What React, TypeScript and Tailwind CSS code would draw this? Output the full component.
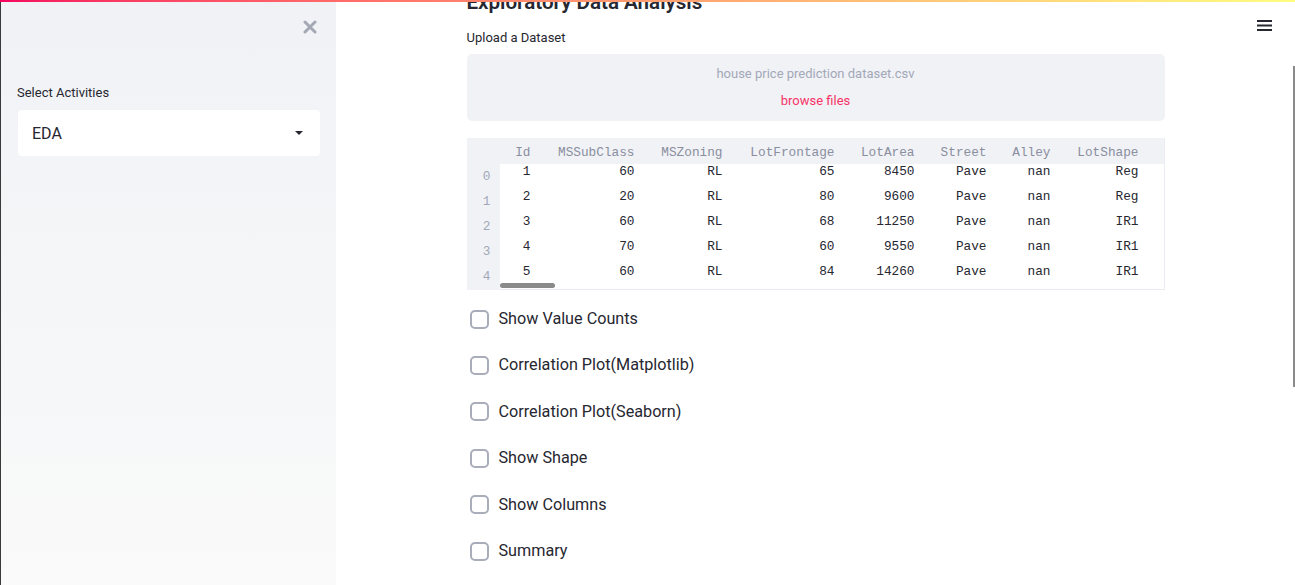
import { useState } from "react";

const columns = [
  { name: "Id", w: "w-[45px]" },
  { name: "MSSubClass", w: "w-[104px]" },
  { name: "MSZoning", w: "w-[88px]" },
  { name: "LotFrontage", w: "w-[112px]" },
  { name: "LotArea", w: "w-[80px]" },
  { name: "Street", w: "w-[72px]" },
  { name: "Alley", w: "w-[64px]" },
  { name: "LotShape", w: "w-[88px]" },
];

const rows = [
  ["1", "60", "RL", "65", "8450", "Pave", "nan", "Reg"],
  ["2", "20", "RL", "80", "9600", "Pave", "nan", "Reg"],
  ["3", "60", "RL", "68", "11250", "Pave", "nan", "IR1"],
  ["4", "70", "RL", "60", "9550", "Pave", "nan", "IR1"],
  ["5", "60", "RL", "84", "14260", "Pave", "nan", "IR1"],
];

const options = [
  "Show Value Counts",
  "Correlation Plot(Matplotlib)",
  "Correlation Plot(Seaborn)",
  "Show Shape",
  "Show Columns",
  "Summary",
];

const Checkbox = ({ label }: { label: string }) => {
  const [checked, setChecked] = useState(false);
  return (
    <label
      className="flex h-[46.4px] items-center cursor-pointer"
      onClick={() => setChecked(!checked)}
    >
      <span
        className={`ml-[3px] w-[19px] h-[19px] rounded-[5px] border-2 ${
          checked ? "border-[#f63366] bg-[#f63366]" : "border-[#a9adb9] bg-white"
        }`}
      />
      <span className="ml-[10px] text-[16.2px] text-[#262730]">{label}</span>
    </label>
  );
};

const DataTable = () => (
  <div className="mt-[17px] flex font-['Liberation_Mono',monospace] text-[12.75px]">
    {/* index column */}
    <div className="w-[33px] bg-[#f0f2f6] text-[#a3a8b8]">
      <div className="h-[26px]" />
      {rows.map((_, i) => (
        <div key={i} className="h-[25px] flex items-center justify-center pl-[7px]">
          {i}
        </div>
      ))}
    </div>

    {/* data */}
    <div className="flex-1 border-r border-b border-[#eaecf1] relative">
      <div className="flex h-[26px] items-center pt-[3px] bg-[#f0f2f6] text-[#8a8e9e]">
        {columns.map((c) => (
          <div key={c.name} className={`${c.w} text-right pr-[14px]`}>
            {c.name}
          </div>
        ))}
      </div>
      {rows.map((r, i) => (
        <div key={i} className="flex h-[25px] text-[#262730]">
          {r.map((v, j) => (
            <div key={j} className={`${columns[j].w} text-right pr-[14px] leading-[16px]`}>
              {v}
            </div>
          ))}
        </div>
      ))}
      {/* horizontal scrollbar thumb */}
      <div className="absolute left-0 bottom-[1px] w-[55px] h-[5px] rounded-full bg-[#8a8a8a]" />
    </div>
  </div>
);

export default function App() {
  return (
    <div className="relative w-[1295px] h-[585px] overflow-hidden bg-white font-['Roboto',sans-serif] text-[#262730]">
      {/* top decoration */}
      <div className="absolute top-0 left-0 right-0 h-[2px] bg-gradient-to-r from-[#f5005f] to-[#fffd80] z-10" />

      <div className="flex h-full">
        {/* Sidebar */}
        <aside className="w-[336px] h-full border-l border-[#3a3a3a] bg-gradient-to-b from-[#f0f2f6] to-[#fafafa] pl-[16px] pr-[16px]">
          <div className="flex justify-end pt-[20px] pr-[3px]">
            <svg width="14" height="14" viewBox="0 0 14 14">
              <path d="M2 2 L12 12 M12 2 L2 12" stroke="#a3a8b4" strokeWidth="3" strokeLinecap="round" />
            </svg>
          </div>
          <div className="mt-[49px] text-[13px] leading-[20px]">Select Activities</div>
          <div className="mt-[7px] ml-[1px] h-[46px] bg-white rounded-[4px] flex items-center justify-between pl-[14px] pr-[17px]">
            <span className="text-[16px] pt-[1px]">EDA</span>
            <svg width="8" height="4" viewBox="0 0 8 4">
              <path d="M0 0 L8 0 L4 4 Z" fill="#262730" />
            </svg>
          </div>
        </aside>

        {/* Main */}
        <main className="flex-1 relative">
          <button className="absolute right-[23px] top-[20px]">
            <svg width="15" height="11" viewBox="0 0 15 11">
              <rect x="0" y="0" width="15" height="2" fill="#262730" />
              <rect x="0" y="4.5" width="15" height="2" fill="#262730" />
              <rect x="0" y="9" width="15" height="2" fill="#262730" />
            </svg>
          </button>

          <div className="w-[698px] mx-auto">
            <h1 className="-mt-[10px] text-[20.6px] leading-[24px] font-semibold">
              Exploratory Data Analysis
            </h1>
            <div className="mt-[14px] text-[13px] leading-[20px]">Upload a Dataset</div>

            <div className="mt-[6px] h-[67px] bg-[#f0f2f6] rounded-[5px] flex flex-col items-center text-[13px]">
              <div className="mt-[11px] leading-[18px] text-[#a3a8b8]">
                house price prediction dataset.csv
              </div>
              <div className="mt-[9px] leading-[18px] text-[#f63366]">browse files</div>
            </div>

            <DataTable />

            <div className="mt-[6px]">
              {options.map((o) => (
                <Checkbox key={o} label={o} />
              ))}
            </div>
          </div>

          {/* vertical page scrollbar */}
          <div className="absolute right-0 top-[66px] w-[2px] h-[321px] bg-[#8a8a8a]" />
        </main>
      </div>
    </div>
  );
}
